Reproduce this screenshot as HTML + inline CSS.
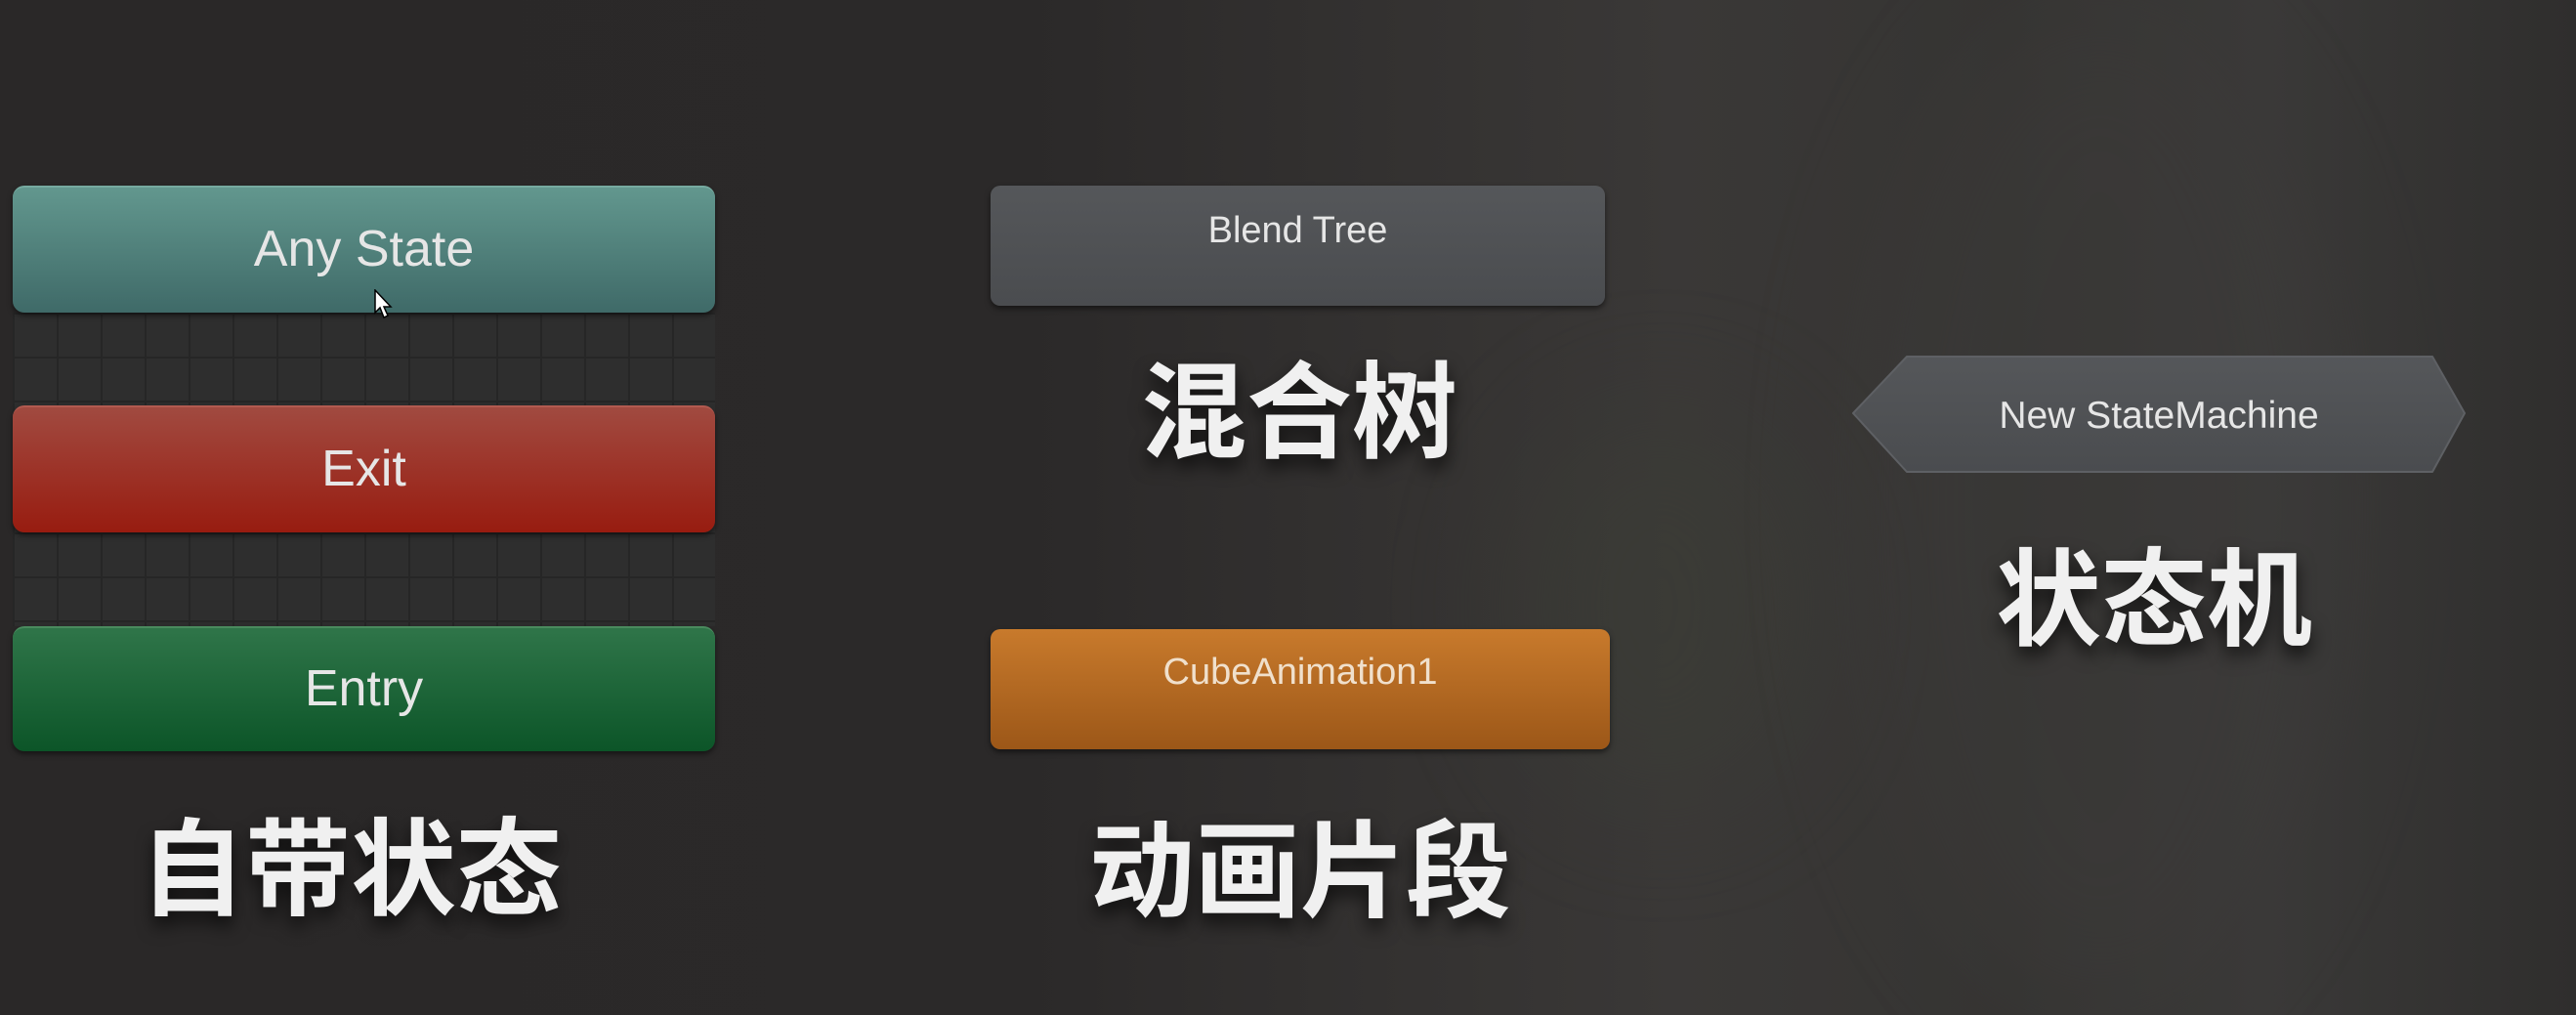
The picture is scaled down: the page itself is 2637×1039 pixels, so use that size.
<!DOCTYPE html>
<html><head><meta charset="utf-8"><style>
html,body{margin:0;padding:0}
body{width:2637px;height:1039px;overflow:hidden;position:relative;
background:linear-gradient(90deg,#2a2828 0%,#2b2929 40%,#343231 55%,#3a3837 65%,#353432 78%,#3a3938 88%,#2f2e2d 100%);
font-family:"Liberation Sans","Noto Sans CJK SC",sans-serif}
.glow{position:absolute;border-radius:50%;filter:blur(60px)}
.grid{position:absolute;left:13px;top:320px;width:719px;height:321px;background-color:#2e2e2e;
background-image:linear-gradient(90deg,#262626 2px,transparent 2px),linear-gradient(#262626 2px,transparent 2px);
background-size:45px 45px;background-position:0 0}
.node{position:absolute;border-radius:12px;color:#e6e6e6;text-align:center;box-shadow:0 3px 6px rgba(0,0,0,.5)}
.big{font-size:52px}
.small{font-size:38px}
.cn{position:absolute;font-family:"Noto Sans CJK SC","WenQuanYi Zen Hei",sans-serif;font-weight:bold;font-size:108px;color:#f0f0f0;
text-shadow:0 10px 18px rgba(0,0,0,.7);line-height:1;white-space:nowrap}
</style></head><body>
<div class="glow" style="left:1550px;top:420px;width:300px;height:400px;background:#3c3e36;opacity:.5"></div>
<div class="glow" style="left:1900px;top:0;width:500px;height:1039px;background:#3e3c3b;opacity:.4"></div>
<div class="grid"></div>
<div class="node big" style="left:13px;top:190px;width:719px;height:130px;line-height:126px;background:linear-gradient(#62978e,#3f6a68);border-top:2px solid #76aaa0;box-sizing:border-box">Any State</div>
<div class="node big" style="left:13px;top:415px;width:719px;height:130px;line-height:126px;background:linear-gradient(#a14a40,#981c10);border-top:2px solid #b25a50;box-sizing:border-box">Exit</div>
<div class="node big" style="left:13px;top:641px;width:719px;height:128px;line-height:124px;background:linear-gradient(#2f7549,#0c5528);border-top:2px solid #4a8a5e;box-sizing:border-box">Entry</div>
<svg style="position:absolute;left:383px;top:296px" width="22" height="32" viewBox="0 0 22 32"><path d="M1 1 L1 24 L6 19 L10 29 L14 27 L10 18 L17 18 Z" fill="#fff" stroke="#000" stroke-width="1.5"/></svg>

<div class="node small" style="left:1014px;top:190px;width:629px;height:123px;background:linear-gradient(#55575a,#4a4c4f);border-radius:10px;line-height:92px">Blend Tree</div>
<div class="node small" style="left:1014px;top:644px;width:634px;height:123px;background:linear-gradient(#c87a2c,#9c5718);border-radius:10px;line-height:88px;color:#f0e0cc">CubeAnimation1</div>

<svg style="position:absolute;left:1890px;top:360px" width="640" height="130" viewBox="0 0 640 130">
<defs><linearGradient id="g" x1="0" y1="0" x2="0" y2="1"><stop offset="0" stop-color="#55575a"/><stop offset="1" stop-color="#4a4c4f"/></linearGradient></defs>
<path d="M62 5 L600 5 L633 63 L600 123 L62 123 L7 63 Z" fill="url(#g)" stroke="#5e6064" stroke-width="2" stroke-linejoin="round"/>
<text x="320" y="78" text-anchor="middle" font-family="Liberation Sans" font-size="39" fill="#e6e6e6">New StateMachine</text>
</svg>

<div class="cn" style="left:143px;top:828px">自带状态</div>
<div class="cn" style="left:1115px;top:830px">动画片段</div>
<div class="cn" style="left:1168px;top:360px">混合树</div>
<div class="cn" style="left:2043px;top:552px">状态机</div>
</body></html>
